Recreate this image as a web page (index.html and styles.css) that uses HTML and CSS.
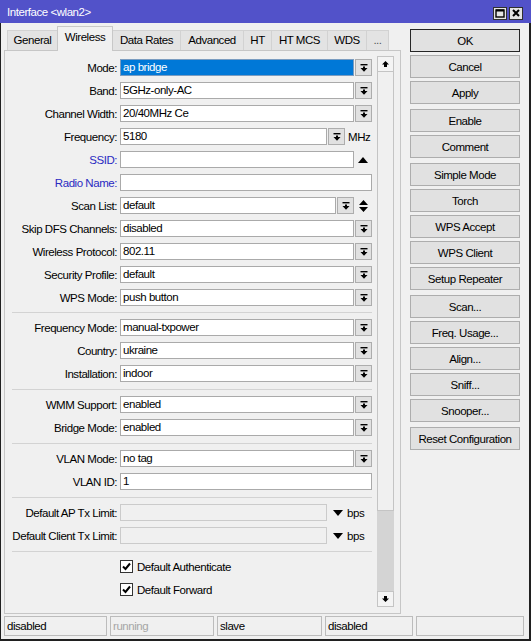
FILE: index.html
```html
<!DOCTYPE html>
<html>
<head>
<meta charset="utf-8">
<title>Interface wlan2</title>
<link rel="stylesheet" href="styles.css">
</head>
<body>
<div class="window">
  <div class="titlebar">
    <span class="title">Interface &lt;wlan2&gt;</span>
    <div class="tbtns">
      <span class="tbtn"><svg width="10" height="9" viewBox="0 0 10 9"><rect x="1" y="1" width="8" height="7" fill="none" stroke="#000" stroke-width="1.4"/><rect x="1" y="0.5" width="8" height="2" fill="#000"/></svg></span>
      <span class="tbtn"><svg width="8" height="8" viewBox="0 0 8 8"><path d="M1 1 7 7M7 1 1 7" stroke="#000" stroke-width="2"/></svg></span>
    </div>
  </div>
  <div class="body">
    <div class="main">
      <div class="leftcol">
        <div class="tabs">
          <div class="tab t-general">General</div>
          <div class="tab active t-wireless">Wireless</div>
          <div class="tab t-rates">Data Rates</div>
          <div class="tab t-adv">Advanced</div>
          <div class="tab t-ht">HT</div>
          <div class="tab t-mcs">HT MCS</div>
          <div class="tab t-wds">WDS</div>
          <div class="tab dots">...</div>
        </div>
        <div class="panel">
          <div class="form">
            <div class="row"><span class="lbl">Mode:</span><span class="field w-sel selected">ap bridge</span><span class="dd"><svg width="8" height="8" viewBox="0 0 8 8"><rect x="0.5" y="0" width="7" height="1.4"/><path d="M3 2.4h2v1.6h2.5L4 7.8 0.5 4H3z"/></svg></span></div>
            <div class="row"><span class="lbl">Band:</span><span class="field w-sel">5GHz-only-AC</span><span class="dd"><svg width="8" height="8" viewBox="0 0 8 8"><rect x="0.5" y="0" width="7" height="1.4"/><path d="M3 2.4h2v1.6h2.5L4 7.8 0.5 4H3z"/></svg></span></div>
            <div class="row"><span class="lbl">Channel Width:</span><span class="field w-sel">20/40MHz Ce</span><span class="dd"><svg width="8" height="8" viewBox="0 0 8 8"><rect x="0.5" y="0" width="7" height="1.4"/><path d="M3 2.4h2v1.6h2.5L4 7.8 0.5 4H3z"/></svg></span></div>
            <div class="row"><span class="lbl">Frequency:</span><span class="field w-freq">5180</span><span class="dd"><svg width="8" height="8" viewBox="0 0 8 8"><rect x="0.5" y="0" width="7" height="1.4"/><path d="M3 2.4h2v1.6h2.5L4 7.8 0.5 4H3z"/></svg></span><span class="unit">MHz</span></div>
            <div class="row"><span class="lbl blue">SSID:</span><span class="field w-sel"></span><span class="side"><svg width="10" height="6" viewBox="0 0 10 6"><path d="M5 0 10 6H0z"/></svg></span></div>
            <div class="row"><span class="lbl blue">Radio Name:</span><span class="field w-full"></span></div>
            <div class="row"><span class="lbl">Scan List:</span><span class="field w-scan">default</span><span class="dd"><svg width="8" height="8" viewBox="0 0 8 8"><rect x="0.5" y="0" width="7" height="1.4"/><path d="M3 2.4h2v1.6h2.5L4 7.8 0.5 4H3z"/></svg></span><span class="side"><svg width="9" height="12" viewBox="0 0 9 12"><path d="M4.5 0 9 5H0z M0 7h9l-4.5 5z"/></svg></span></div>
            <div class="row"><span class="lbl">Skip DFS Channels:</span><span class="field w-sel">disabled</span><span class="dd"><svg width="8" height="8" viewBox="0 0 8 8"><rect x="0.5" y="0" width="7" height="1.4"/><path d="M3 2.4h2v1.6h2.5L4 7.8 0.5 4H3z"/></svg></span></div>
            <div class="row"><span class="lbl">Wireless Protocol:</span><span class="field w-sel">802.11</span><span class="dd"><svg width="8" height="8" viewBox="0 0 8 8"><rect x="0.5" y="0" width="7" height="1.4"/><path d="M3 2.4h2v1.6h2.5L4 7.8 0.5 4H3z"/></svg></span></div>
            <div class="row"><span class="lbl">Security Profile:</span><span class="field w-sel">default</span><span class="dd"><svg width="8" height="8" viewBox="0 0 8 8"><rect x="0.5" y="0" width="7" height="1.4"/><path d="M3 2.4h2v1.6h2.5L4 7.8 0.5 4H3z"/></svg></span></div>
            <div class="row"><span class="lbl">WPS Mode:</span><span class="field w-sel">push button</span><span class="dd"><svg width="8" height="8" viewBox="0 0 8 8"><rect x="0.5" y="0" width="7" height="1.4"/><path d="M3 2.4h2v1.6h2.5L4 7.8 0.5 4H3z"/></svg></span></div>
            <div class="sep first"></div>
            <div class="row"><span class="lbl">Frequency Mode:</span><span class="field w-sel">manual-txpower</span><span class="dd"><svg width="8" height="8" viewBox="0 0 8 8"><rect x="0.5" y="0" width="7" height="1.4"/><path d="M3 2.4h2v1.6h2.5L4 7.8 0.5 4H3z"/></svg></span></div>
            <div class="row"><span class="lbl">Country:</span><span class="field w-sel">ukraine</span><span class="dd"><svg width="8" height="8" viewBox="0 0 8 8"><rect x="0.5" y="0" width="7" height="1.4"/><path d="M3 2.4h2v1.6h2.5L4 7.8 0.5 4H3z"/></svg></span></div>
            <div class="row"><span class="lbl">Installation:</span><span class="field w-sel">indoor</span><span class="dd"><svg width="8" height="8" viewBox="0 0 8 8"><rect x="0.5" y="0" width="7" height="1.4"/><path d="M3 2.4h2v1.6h2.5L4 7.8 0.5 4H3z"/></svg></span></div>
            <div class="sep"></div>
            <div class="row"><span class="lbl">WMM Support:</span><span class="field w-sel">enabled</span><span class="dd"><svg width="8" height="8" viewBox="0 0 8 8"><rect x="0.5" y="0" width="7" height="1.4"/><path d="M3 2.4h2v1.6h2.5L4 7.8 0.5 4H3z"/></svg></span></div>
            <div class="row"><span class="lbl">Bridge Mode:</span><span class="field w-sel">enabled</span><span class="dd"><svg width="8" height="8" viewBox="0 0 8 8"><rect x="0.5" y="0" width="7" height="1.4"/><path d="M3 2.4h2v1.6h2.5L4 7.8 0.5 4H3z"/></svg></span></div>
            <div class="sep"></div>
            <div class="row"><span class="lbl">VLAN Mode:</span><span class="field w-sel">no tag</span><span class="dd"><svg width="8" height="8" viewBox="0 0 8 8"><rect x="0.5" y="0" width="7" height="1.4"/><path d="M3 2.4h2v1.6h2.5L4 7.8 0.5 4H3z"/></svg></span></div>
            <div class="row"><span class="lbl">VLAN ID:</span><span class="field w-full">1</span></div>
            <div class="sep"></div>
            <div class="row"><span class="lbl">Default AP Tx Limit:</span><span class="field w-freq disabled"></span><span class="tri"><svg width="10" height="6" viewBox="0 0 10 6"><path d="M0 0h10L5 6z"/></svg></span><span class="unit2">bps</span></div>
            <div class="row"><span class="lbl">Default Client Tx Limit:</span><span class="field w-freq disabled"></span><span class="tri"><svg width="10" height="6" viewBox="0 0 10 6"><path d="M0 0h10L5 6z"/></svg></span><span class="unit2">bps</span></div>
            <div class="sep"></div>
            <div class="row chk"><span class="box"><svg width="11" height="11" viewBox="0 0 11 11"><path d="M2 5.5 4.5 8 9 2.5" fill="none" stroke="#000" stroke-width="2"/></svg></span><span class="chklbl">Default Authenticate</span></div>
            <div class="row chk"><span class="box"><svg width="11" height="11" viewBox="0 0 11 11"><path d="M2 5.5 4.5 8 9 2.5" fill="none" stroke="#000" stroke-width="2"/></svg></span><span class="chklbl">Default Forward</span></div>
          </div>
          <div class="scrollbar">
            <div class="sb-btn"><svg width="7" height="6" viewBox="0 0 7 6"><path d="M3.5 0 7 3.6H5V6H2V3.6H0z"/></svg></div>
            <div class="sb-thumb"></div>
            <div class="sb-track"></div>
            <div class="sb-btn"><svg width="7" height="6" viewBox="0 0 7 6"><path d="M2 0h3v2.4h2L3.5 6 0 2.4h2z"/></svg></div>
          </div>
        </div>
      </div>
      <div class="rightcol">
        <div class="group">
          <button class="btn default">OK</button>
          <button class="btn">Cancel</button>
          <button class="btn">Apply</button>
        </div>
        <div class="group">
          <button class="btn">Enable</button>
          <button class="btn">Comment</button>
        </div>
        <div class="group">
          <button class="btn">Simple Mode</button>
          <button class="btn">Torch</button>
          <button class="btn">WPS Accept</button>
          <button class="btn">WPS Client</button>
          <button class="btn">Setup Repeater</button>
        </div>
        <div class="group">
          <button class="btn">Scan...</button>
          <button class="btn">Freq. Usage...</button>
          <button class="btn">Align...</button>
          <button class="btn">Sniff...</button>
          <button class="btn">Snooper...</button>
        </div>
        <div class="group">
          <button class="btn">Reset Configuration</button>
        </div>
      </div>
    </div>
    <div class="status">
      <div class="cell c1">disabled</div>
      <div class="cell c2 dim">running</div>
      <div class="cell c3">slave</div>
      <div class="cell c4">disabled</div>
      <div class="cell c5"></div>
    </div>
  </div>
</div>
</body>
</html>
```

FILE: styles.css
```css
* { box-sizing: border-box; }
html, body { margin: 0; padding: 0; }
body {
  width: 531px;
  height: 641px;
  overflow: hidden;
  background: #f0f0f0;
  font-family: "Liberation Sans", Arial, sans-serif;
  font-size: 11.5px;
  letter-spacing: -0.45px;
  color: #000;
}
.window {
  width: 531px;
  height: 641px;
  display: flex;
  flex-direction: column;
}
.titlebar {
  height: 23px;
  flex: none;
  background: #5252c9;
  color: #fff;
  display: flex;
  align-items: center;
  justify-content: space-between;
  padding: 0 8px 0 7px;
}
.title { margin-top: 1px; }
.tbtns { display: flex; gap: 2px; margin-top: 3px; }
.tbtn {
  width: 14px;
  height: 13px;
  background: #e4e4e4;
  border: 1px solid #303030;
  display: flex;
  align-items: center;
  justify-content: center;
}
.body {
  flex: 1;
  border-left: 1px solid #202020;
  border-right: 2px solid #202020;
  border-bottom: 2px solid #202020;
  padding: 3px 3px 3px 3px;
  display: flex;
  flex-direction: column;
}
.main { display: flex; height: 588px; flex: none; }
.leftcol { width: 397px; display: flex; flex-direction: column; }
.tabs {
  height: 24px;
  display: flex;
  align-items: flex-end;
  padding-left: 3px;
}
.tab {
  height: 20px;
  line-height: 19px;
  padding: 0;
  text-align: center;
  background: #e3e3e3;
  border: 1px solid #d2d2d2;
  border-bottom: 0;
  margin-right: -1px;
  white-space: nowrap;
}
.tab.active {
  height: 25px;
  line-height: 21px;
  background: #f0f0f0;
  border-color: #c8c8c8;
  margin-bottom: -1px;
  position: relative;
  z-index: 1;
}
.t-general { width: 51px; }
.t-wireless { width: 56px; }
.t-rates { width: 69px; }
.t-adv { width: 64px; }
.t-ht { width: 29px; }
.t-mcs { width: 57px; }
.t-wds { width: 40px; }
.tab.dots { width: 23px; color: #555; }
.panel {
  height: 564px;
  border: 1px solid #c6c6c6;
  background: #f0f0f0;
  display: flex;
  padding: 5px 6px 0 0;
}
.form { width: 367px; flex: none; }
.row { display: flex; align-items: center; height: 23px; }
.lbl {
  width: 112px;
  flex: none;
  text-align: right;
  margin-right: 3px;
  white-space: nowrap;
}
.lbl.blue { color: #2a2ac2; }
.field {
  height: 17px;
  flex: none;
  border: 1px solid #aaaaaa;
  background: #fff;
  padding: 0 2px;
  line-height: 15px;
  white-space: nowrap;
  overflow: hidden;
}
.field.selected { background: #0078d7; color: #fff; border-color: #7a9cc0; }
.field.disabled { background: #f0f0f0; border-color: #cbcbcb; }
.w-sel { width: 234px; }
.w-full { width: 252px; }
.w-freq { width: 207px; }
.w-scan { width: 216px; }
.dd {
  width: 17px;
  height: 17px;
  flex: none;
  margin-left: 1px;
  border: 1px solid #adadad;
  background: #e1e1e1;
  display: flex;
  align-items: center;
  justify-content: center;
}
.dd svg { fill: #000; }
.unit { margin-left: 3px; }
.side {
  width: 18px;
  display: flex;
  justify-content: center;
  align-items: center;
}
.tri { margin-left: 6px; display: flex; align-items: center; }
.unit2 { margin-left: 4px; }
.sep {
  border-top: 1px solid #d3d3d3;
  margin: 4px 0 3px 7px;
  width: 360px;
}
.sep.first { margin: 3px 0 3px 7px; }
.row.chk { padding-left: 115px; }
.box {
  width: 13px;
  height: 13px;
  border: 1px solid #333;
  background: #fff;
  display: flex;
  align-items: center;
  justify-content: center;
}
.chklbl { margin-left: 4px; }
.scrollbar {
  width: 17px;
  flex: none;
  margin: 0 0 6px 5px;
  display: flex;
  flex-direction: column;
}
.sb-btn {
  height: 16px;
  flex: none;
  border: 1px solid #c4c4c4;
  background: #f4f4f4;
  display: flex;
  align-items: center;
  justify-content: center;
}
.sb-thumb {
  height: 439px;
  flex: none;
  background: #f0f0f0;
  border-left: 1px solid #c4c4c4;
  border-right: 1px solid #c4c4c4;
  border-bottom: 1px solid #c4c4c4;
}
.sb-track { flex: 1; background: #d4d4d4; }
.rightcol {
  width: 110px;
  margin-left: 9px;
  padding-top: 3px;
}
.group { margin-bottom: 5px; }
.btn {
  display: block;
  width: 110px;
  height: 23px;
  margin: 0 0 3px 0;
  padding: 0;
  border: 1px solid #adadad;
  background: #e1e1e1;
  font: inherit;
  letter-spacing: inherit;
  color: #000;
  text-align: center;
  white-space: nowrap;
}
.btn.default { border-color: #262626; }
.status {
  display: flex;
  gap: 3px;
  height: 20px;
  margin-top: 2px;
  flex: none;
}
.cell {
  border: 1px solid #bcbcbc;
  padding-left: 2px;
  line-height: 18px;
  white-space: nowrap;
}
.c1 { width: 103px; }
.c2 { width: 104px; }
.c3 { width: 105px; }
.c4 { width: 88px; }
.c5 { width: 108px; }
.dim { color: #a6a6a6; }
```
